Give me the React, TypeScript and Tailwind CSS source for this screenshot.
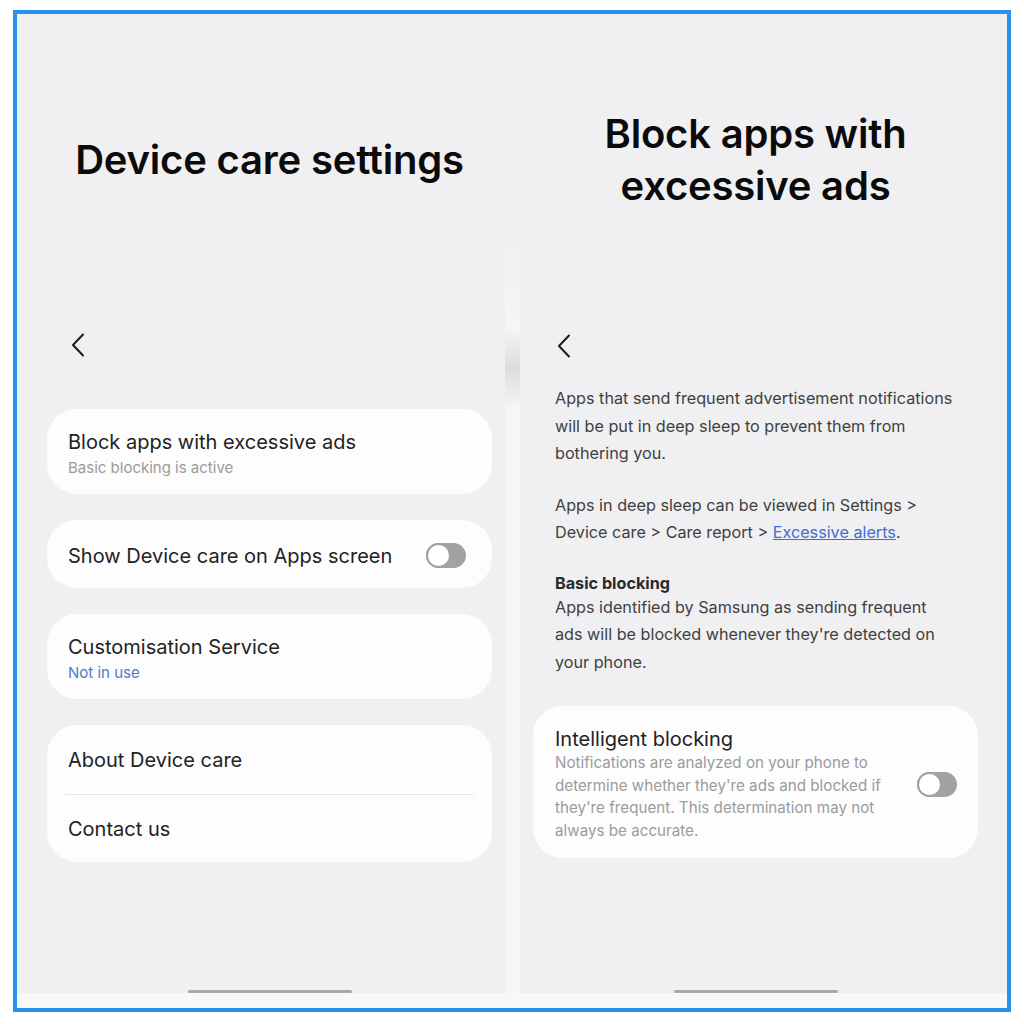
import React from "react";

const FONT = { fontFamily: "Inter, 'Noto Sans', sans-serif" };

function BackArrow() {
  return (
    <svg width="14" height="24" viewBox="0 0 14 24" fill="none">
      <path d="M12 1.5 L2 12 L12 22.5" stroke="#1c1c1c" strokeWidth="2" strokeLinecap="round" strokeLinejoin="round" />
    </svg>
  );
}

function Toggle() {
  return (
    <div className="relative h-[25px] w-[40px] shrink-0 rounded-full bg-[#a2a2a2]">
      <div className="absolute left-0 top-0 h-[25px] w-[25px] rounded-full border-[2.5px] border-[#a2a2a2] bg-white" />
    </div>
  );
}

function HomeBar() {
  return <div className="mt-auto h-[3px] w-[164px] self-center rounded-full bg-[#a9a9ab]" />;
}

function TwoLineCard({ title, sub, subClass }: { title: string; sub: string; subClass: string }) {
  return (
    <div className="flex h-[85px] flex-col justify-center rounded-[30px] bg-[#fdfdfe] px-[21px] pt-[4px]">
      <div className="text-[20px] leading-[26px] text-[#222]">{title}</div>
      <div className={`mt-[2px] text-[15px] leading-[22px] ${subClass}`}>{sub}</div>
    </div>
  );
}

function LeftPanel() {
  return (
    <div className="flex w-[488px] flex-col pl-[30px] pr-[13px]">
      <div className="flex h-[292px] items-center justify-center">
        <h1 className="text-[40px] font-semibold tracking-[-0.2px] text-[#0b0b0b]">Device care settings</h1>
      </div>
      <div className="mt-[27px] h-[24px] pl-[24px]">
        <BackArrow />
      </div>
      <div className="mt-[52px] flex flex-col gap-[26px]">
        <TwoLineCard title="Block apps with excessive ads" sub="Basic blocking is active" subClass="text-[#9b9b9b]" />
        <div className="flex h-[68px] items-center justify-between rounded-[30px] bg-[#fdfdfe] pl-[21px] pr-[26px] pt-[3px]">
          <span className="text-[20px] text-[#222]">Show Device care on Apps screen</span>
          <Toggle />
        </div>
        <TwoLineCard title="Customisation Service" sub="Not in use" subClass="text-[#4a7cc6]" />
        <div className="flex flex-col rounded-[30px] bg-[#fdfdfe]">
          <div className="flex h-[69px] items-center px-[21px] text-[20px] text-[#222]">About Device care</div>
          <div className="mx-[18px] h-px bg-[#e6e6e8]" />
          <div className="flex h-[67px] items-center px-[21px] text-[20px] text-[#222]">Contact us</div>
        </div>
      </div>
      <HomeBar />
    </div>
  );
}

function RightPanel() {
  return (
    <div className="flex w-[487px] flex-col pl-[13px] pr-[29px]">
      <div className="flex h-[292px] items-center justify-center">
        <h1 className="text-center text-[40px] font-semibold leading-[52px] tracking-[-0.2px] text-[#0b0b0b]">
          Block apps with
          <br />
          excessive ads
        </h1>
      </div>
      <div className="mt-[28px] h-[24px] pl-[24px]">
        <BackArrow />
      </div>
      <div className="mt-[27px] px-[22px] text-[16.2px] leading-[27.5px] text-[#404040]">
        <p>
          Apps that send frequent advertisement notifications will be put in deep sleep to prevent them from
          bothering you.
        </p>
        <p className="mt-[24px]">
          Apps in deep sleep can be viewed in Settings &gt; Device care &gt; Care report &gt;{" "}
          <span className="text-[#3b6fd0] underline">Excessive alerts</span>.
        </p>
        <p className="mt-[25px] font-bold leading-[22px] text-[#2a2a2a]">Basic blocking</p>
        <p className="pr-[20px]">
          Apps identified by Samsung as sending frequent ads will be blocked whenever they're detected on your
          phone.
        </p>
      </div>
      <div className="mt-[30px] flex items-center rounded-[30px] bg-[#fdfdfe] pb-[16px] pl-[22px] pr-[21px] pt-[20px]">
        <div className="flex-1 pr-[28px]">
          <div className="text-[20px] leading-[26px] text-[#222]">Intelligent blocking</div>
          <div className="text-[15.2px] leading-[22.5px] text-[#9b9b9b]">
            Notifications are analyzed on your phone to determine whether they're ads and blocked if they're
            frequent. This determination may not always be accurate.
          </div>
        </div>
        <Toggle />
      </div>
      <HomeBar />
    </div>
  );
}

export default function App() {
  return (
    <div className="h-[1024px] w-[1024px] bg-white pb-[12px] pl-[13px] pr-[13px] pt-[10px]" style={FONT}>
      <div className="flex h-full w-full flex-col border-4 border-[#2a90ea] bg-[#f0f0f2]">
        <div className="flex flex-1">
          <LeftPanel />
          <div className="flex w-[15px] flex-col">
            <div className="h-[226px]" />
            <div className="h-[90px] bg-gradient-to-b from-[#f0f0f2] to-[#f6f6f8]" />
            <div className="h-[76px] bg-gradient-to-b from-[#f4f4f6] via-[#dcdcde] to-[#f4f4f6]" />
            <div className="flex-1 bg-[#f6f6f8]" />
          </div>
          <RightPanel />
        </div>
        <div className="h-[15px] bg-[#f7f8fa]" />
      </div>
    </div>
  );
}
